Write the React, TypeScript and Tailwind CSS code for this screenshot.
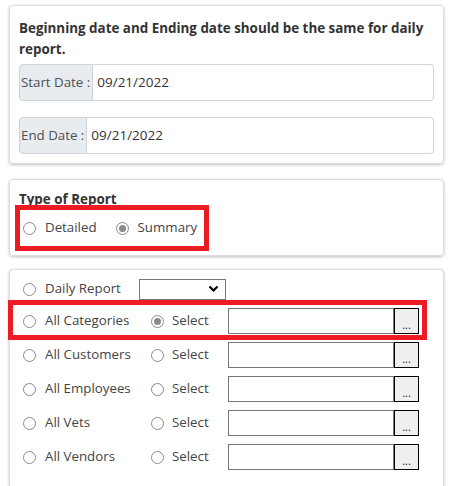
import React from 'react';

const Radio = ({ checked = false }: { checked?: boolean }) => (
  <span className="flex h-[13px] w-[13px] shrink-0 items-center justify-center rounded-full border border-[#8a8a8a] bg-white">
    {checked && <span className="h-[7px] w-[7px] rounded-full bg-[#8a8a8a]" />}
  </span>
);

const DateGroup = ({ label, value }: { label: string; value: string }) => (
  <div className="flex h-[37px] w-full">
    <div className="flex items-center rounded-l-[4px] border border-[#ced4da] bg-[#e9ecef] pl-[1px] pr-[2px] text-[13.3px] text-[#495057]">
      {label}
    </div>
    <div className="flex flex-1 items-center rounded-r-[4px] border border-l-0 border-[#ced4da] pl-[4px] text-[13.5px] text-[#333]">
      {value}
    </div>
  </div>
);

const PickRow = ({ label, selected = false, marked = false }: { label: string; selected?: boolean; marked?: boolean }) => (
  <div className="relative flex h-[34px] items-center pl-[13px]">
    <div className="flex w-[128px] items-center gap-[9px]">
      <Radio />
      <span>{label}</span>
    </div>
    <div className="flex w-[77px] items-center gap-[8px]">
      <Radio checked={selected} />
      <span>Select</span>
    </div>
    <div className="h-[26px] w-[166px] border border-[#767676] bg-white" />
    <button className="flex h-[26px] w-[25px] items-end justify-center border border-black bg-[#efefef] pb-[3px] text-[11px] leading-none text-[#222]">
      ...
    </button>
    {marked && (
      <div className="pointer-events-none absolute -top-[4px] -bottom-[2px] -left-[2px] right-[16px] border-[5px] border-[#ed1c24]" />
    )}
  </div>
);

export default function App() {
  return (
    <div
      className="flex min-h-[486px] flex-col bg-white px-[9px] pt-[5px] text-[13.3px] text-[#444]"
      style={{ fontFamily: '"Open Sans", "Noto Sans", sans-serif' }}
    >
      <div className="rounded-[4px] border border-[#dcdcdc] px-[9px] pt-[12px] pb-[9px] shadow-[0_1px_3px_rgba(0,0,0,0.25)]">
        <p className="text-[13.4px] font-bold leading-[21px] text-[#333]">
          Beginning date and Ending date should be the same for daily report.
        </p>
        <div className="mt-[4px] flex flex-col gap-[16px]">
          <DateGroup label="Start Date :" value="09/21/2022" />
          <DateGroup label="End Date :" value="09/21/2022" />
        </div>
      </div>

      <div className="mt-[15px] rounded-[4px] border border-[#dcdcdc] px-[9px] pt-[9px] pb-[9px] shadow-[0_1px_3px_rgba(0,0,0,0.25)]">
        <p className="text-[13.4px] font-bold leading-[21px] text-[#333]">Type of Report</p>
        <div className="relative flex h-[36px] items-center pl-[4px]">
          <Radio />
          <span className="ml-[9px]">Detailed</span>
          <span className="ml-[19px]">
            <Radio checked />
          </span>
          <span className="ml-[9px]">Summary</span>
          <div className="pointer-events-none absolute -top-[5px] -bottom-[5px] left-[-4px] w-[194px] border-[5px] border-[#ed1c24]" />
        </div>
      </div>

      <div className="mt-[13px] flex-1 rounded-t-[4px] border border-b-0 border-[#dcdcdc] pt-[4px] shadow-[0_1px_3px_rgba(0,0,0,0.25)]">
        <div className="flex h-[30px] items-center pl-[13px]">
          <div className="flex w-[116px] items-center gap-[9px]">
            <Radio />
            <span>Daily Report</span>
          </div>
          <div className="flex h-[21px] w-[87px] items-center justify-end border border-[#767676] bg-white pr-[6px]">
            <svg width="11" height="8" viewBox="0 0 11 8">
              <path d="M1.5 1.5 L5.5 5.5 L9.5 1.5" fill="none" stroke="#000" strokeWidth="2.2" />
            </svg>
          </div>
        </div>
        <PickRow label="All Categories" selected marked />
        <PickRow label="All Customers" />
        <PickRow label="All Employees" />
        <PickRow label="All Vets" />
        <PickRow label="All Vendors" />
      </div>
    </div>
  );
}
